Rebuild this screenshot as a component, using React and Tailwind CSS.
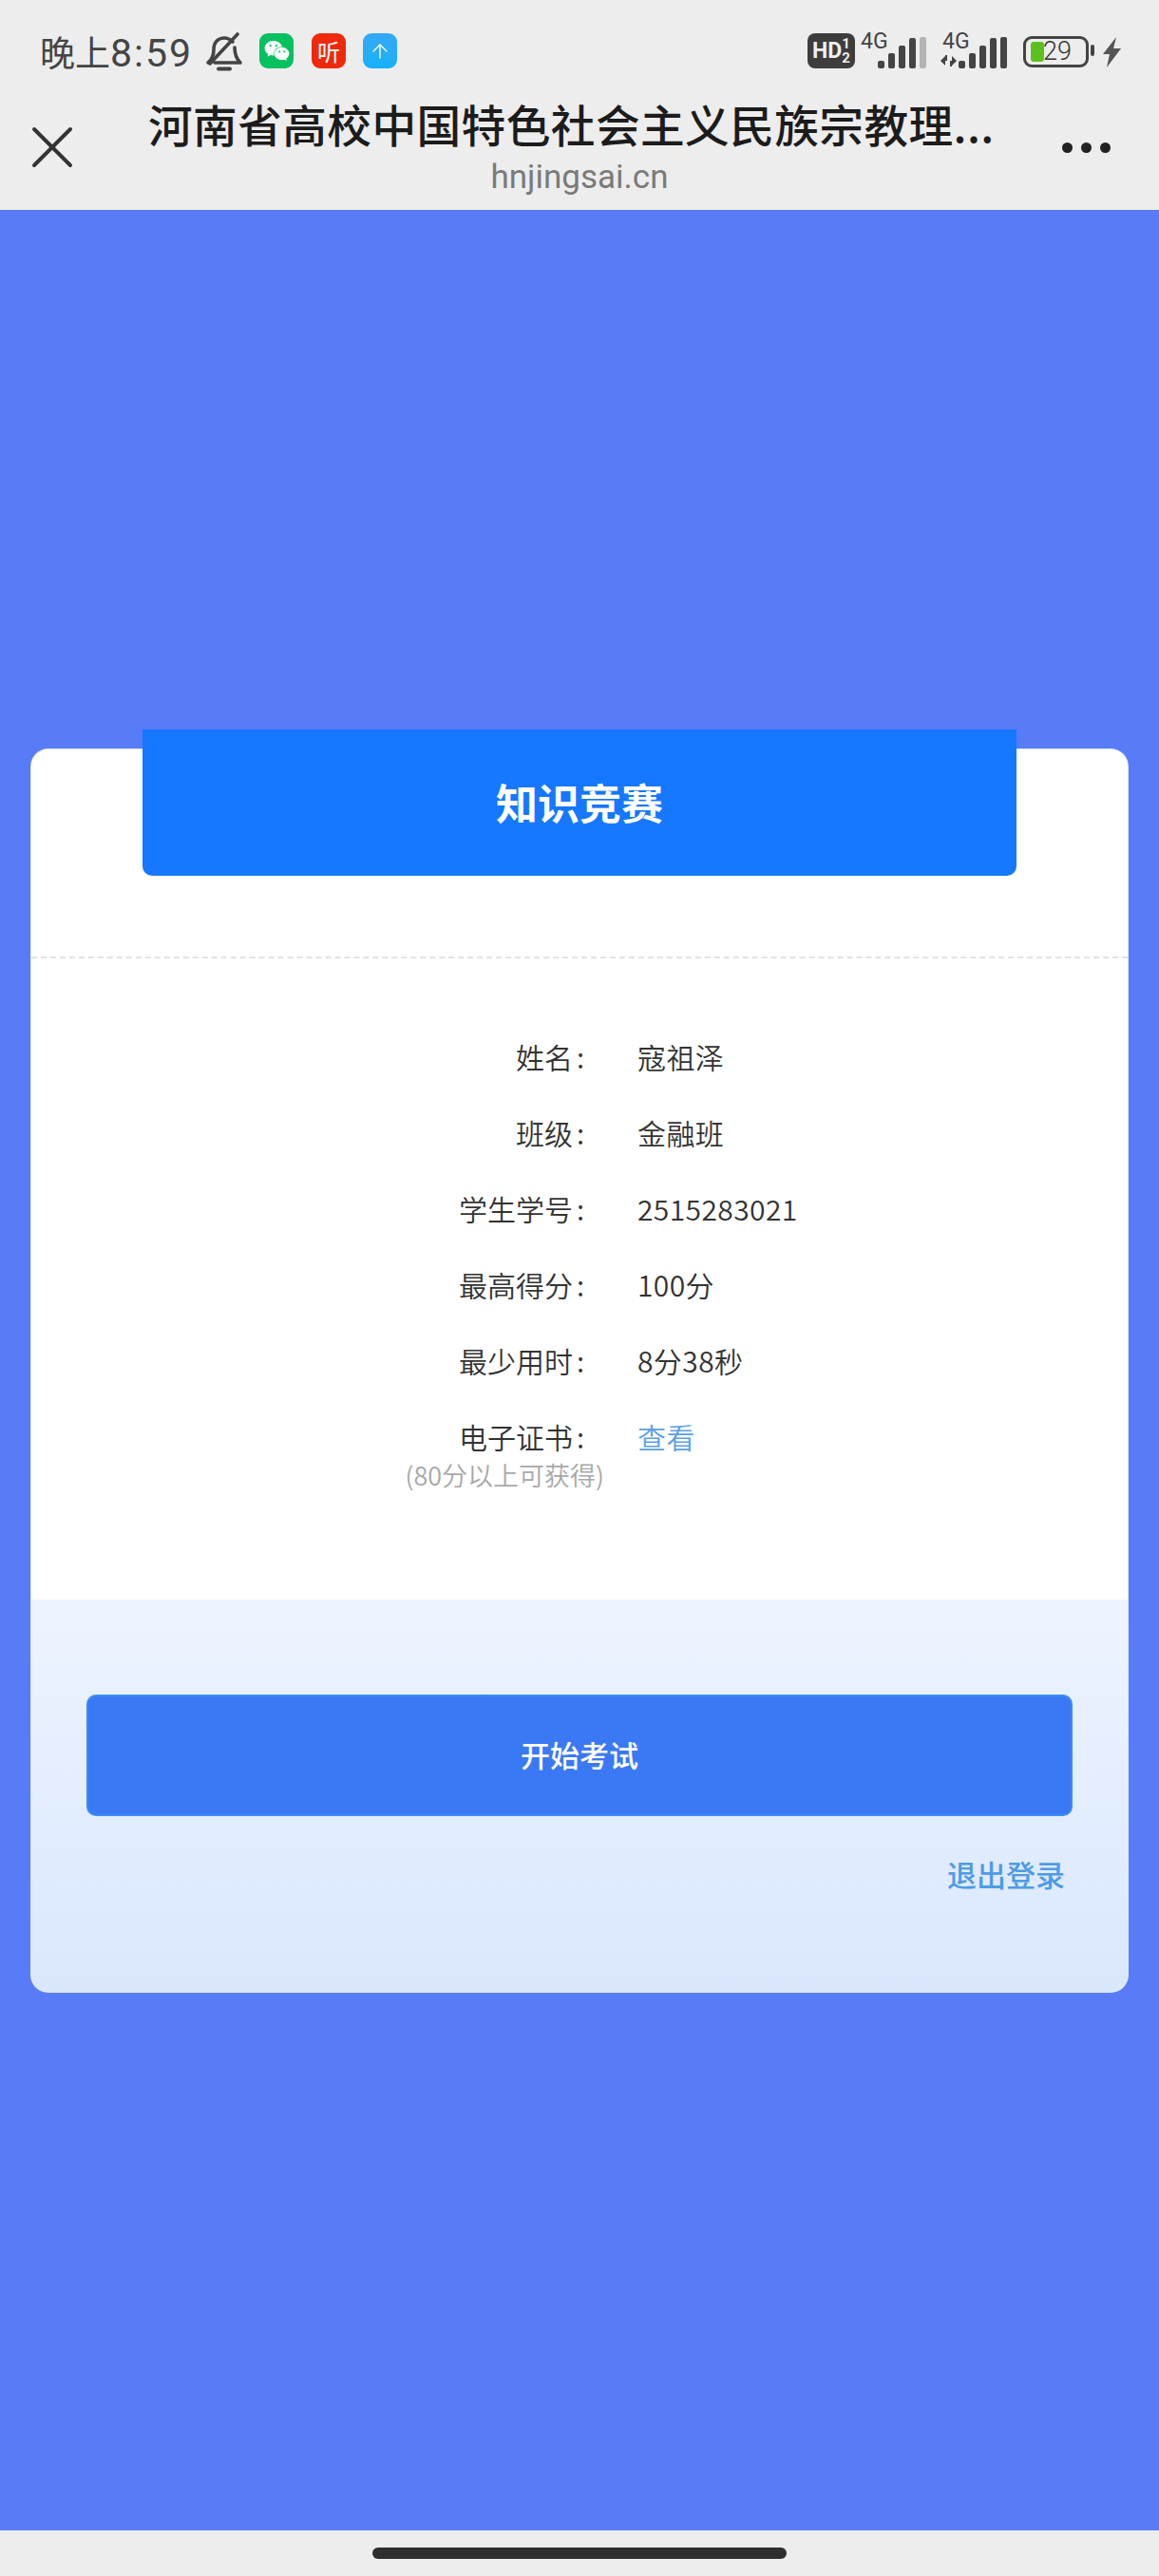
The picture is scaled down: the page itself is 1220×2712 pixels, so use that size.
import { ArrowUp, X } from 'lucide-react';
import { FaWeixin } from 'react-icons/fa';

const CJK = "font-['Noto_Sans_CJK_SC','Noto_Sans',sans-serif]";

const ROWS = [
  { label: '姓名', value: '寇祖泽' },
  { label: '班级', value: '金融班' },
  { label: '学生学号', value: '2515283021' },
  { label: '最高得分', value: '100分' },
  { label: '最少用时', value: '8分38秒' },
];

function BellOff() {
  return (
    <svg width="40" height="42" viewBox="0 0 40 42" fill="none" stroke="#444" strokeWidth="3.6" strokeLinecap="round" strokeLinejoin="round">
      <path d="M3 32 C8 28 9 24 9 18 C9 10 14 6 20 6 C24 6 27 8 29 10" />
      <path d="M31 16 C31 24 33 28 37 32 L10 32" />
      <path d="M14 38.5 H26" strokeWidth="4" />
      <path d="M34 2 L5 33" />
    </svg>
  );
}

function Signal({ faded }) {
  const bars = [
    { x: 0, h: 8 },
    { x: 11, h: 16 },
    { x: 22, h: 24 },
    { x: 33, h: 32 },
  ];
  return (
    <svg width="52" height="33" viewBox="0 0 52 33">
      {bars.map((b) => (
        <rect key={b.x} x={b.x} y={33 - b.h} width="7" height={b.h} rx="2" fill="#444" />
      ))}
      <rect x="44" y="0" width="7" height="33" rx="2" fill={faded ? '#b4b4b4' : '#444'} />
    </svg>
  );
}

function DataArrows() {
  return (
    <svg width="18" height="14" viewBox="0 0 18 14" fill="#444">
      <path d="M1 7 L6 2 V12 Z" />
      <path d="M13 2 L18 7 L13 12 Z" />
      <rect x="6" y="1" width="2" height="6" />
      <rect x="11" y="7" width="2" height="6" />
    </svg>
  );
}

function StatusBar() {
  return (
    <div className="flex h-[76px] items-start pt-[35px] pl-[42px] pr-[39px]">
      <span className={`${CJK} w-[164px] text-[37px] leading-[38px] whitespace-nowrap text-[#444]`}>
        晚上<span className="font-['Roboto',sans-serif] text-[41px] tracking-[2px]">8:59</span>
      </span>
      <span className="ml-[10px] mt-[-1px]">
        <BellOff />
      </span>
      <span className="ml-[17px] flex h-[37px] w-[36px] items-center justify-center rounded-[9px] bg-[#07c160] text-white">
        <FaWeixin size={27} />
      </span>
      <span className={`${CJK} ml-[19px] flex h-[37px] w-[36px] items-center justify-center rounded-[9px] bg-[#ef2a0c] text-[24px] leading-none text-white`}>听</span>
      <span className="ml-[18px] flex h-[37px] w-[36px] items-center justify-center rounded-[9px] bg-gradient-to-b from-[#35a8f5] to-[#12b1fb] text-white">
        <ArrowUp size={24} strokeWidth={1.4} />
      </span>

      <div className="ml-auto flex items-start">
        <span className="flex h-[37px] w-[50px] items-center justify-center rounded-[8px] bg-[#3d3d3d] font-['Roboto',sans-serif] font-bold text-[#eee]">
          <span className="text-[23px] leading-none">HD</span>
          <span className="flex flex-col items-center text-[15px] leading-[15px]">
            <span>1</span>
            <span>2</span>
          </span>
        </span>
        <span className="relative ml-[6px] h-[37px] w-[69px]">
          <span className="absolute left-0 top-[-3px] font-['Roboto',sans-serif] text-[23px] leading-[24px] text-[#444]">4G</span>
          <span className="absolute left-[18px] top-[4px]">
            <Signal faded />
          </span>
        </span>
        <span className="relative ml-[14px] h-[37px] w-[71px]">
          <span className="absolute left-[3px] top-[-3px] font-['Roboto',sans-serif] text-[23px] leading-[24px] text-[#444]">4G</span>
          <span className="absolute left-0 top-[22px]">
            <DataArrows />
          </span>
          <span className="absolute left-[20px] top-[4px]">
            <Signal />
          </span>
        </span>
        <span className="relative ml-[17px] mt-[3px] flex h-[33px] w-[69px] items-center rounded-[9px] border-[3px] border-[#444] pl-[5px]">
          <span className="h-[21px] w-[14px] rounded-[3px] bg-[#5cc11f]" />
          <span className="ml-[-1px] font-['Roboto',sans-serif] text-[27px] font-light leading-none text-[#333]">29</span>
        </span>
        <span className="ml-[2px] mt-[12px] h-[12px] w-[4px] rounded-[2px] bg-[#444]" />
        <svg className="ml-[8px] mt-[4px]" width="21" height="32" viewBox="0 0 21 32" fill="#555">
          <path d="M15 0 L1 18 H8 L5 32 L20 12 H12 Z" />
        </svg>
      </div>
    </div>
  );
}

function TitleBar() {
  return (
    <div className="relative h-[145px]">
      <div className={`${CJK} pl-[156px] pt-[24px] text-[46.7px] font-[450] leading-[60px] tracking-[0.4px] whitespace-nowrap text-[#1c1c1c]`}>
        河南省高校中国特色社会主义民族宗教理...
      </div>
      <div className="mt-[9px] text-center font-['Roboto',sans-serif] text-[35px] leading-[36px] text-[#7a7a7a]">
        hnjingsai.cn
      </div>
      <X className="absolute left-[17px] top-[41px]" size={76} strokeWidth={1.25} color="#333" />
      <div className="absolute left-[1118px] top-[74px] flex gap-[9px]">
        <span className="h-[11px] w-[11px] rounded-full bg-[#222]" />
        <span className="h-[11px] w-[11px] rounded-full bg-[#222]" />
        <span className="h-[11px] w-[11px] rounded-full bg-[#222]" />
      </div>
    </div>
  );
}

function InfoRow({ label, children, note }) {
  return (
    <div className="flex items-start text-[30px] font-[350] leading-[40px] text-[#333]">
      <div className="flex w-[582px] flex-col items-end">
        <span className="whitespace-nowrap">
          {label}
          <span className="ml-[4px]">:</span>
        </span>
        {note && (
          <span className="mr-[-21px] mt-[1px] text-[27px] whitespace-nowrap text-[#a8a8a8]">{note}</span>
        )}
      </div>
      <div className="ml-[56px] tracking-[0.4px] whitespace-nowrap">{children}</div>
    </div>
  );
}

export default function App() {
  return (
    <div className={`${CJK} flex h-[2712px] w-[1220px] flex-col overflow-hidden bg-[#ededed]`}>
      <StatusBar />
      <TitleBar />

      <main className="flex-1 bg-[#587bf7] px-[33px] pt-[568px]">
        <div className="flow-root h-[1308px] rounded-[18px] bg-white shadow-[0_0_0_1px_#dfe6fd]">
          <div className="mx-auto mt-[-21px] flex h-[154px] w-[920px] items-center justify-center rounded-b-[10px] bg-[#1677ff] pb-[2px] text-[44px] font-bold text-white">
            知识竞赛
          </div>
          <div className="mt-[85px] border-t-2 border-dashed border-[#e2e2e2]" />

          <div className="flex h-[675px] flex-col gap-[40px] pt-[83px]">
            {ROWS.map((r) => (
              <InfoRow key={r.label} label={r.label}>
                {r.value}
              </InfoRow>
            ))}
            <InfoRow label="电子证书" note="(80分以上可获得)">
              <span className="text-[#5b9fe6]">查看</span>
            </InfoRow>
          </div>

          <div className="h-[413px] rounded-b-[18px] bg-gradient-to-b from-[#eef4ff] to-[#d9e7fd] px-[58px] pt-[100px]">
            <button className="flex h-[128px] w-full items-center justify-center rounded-[10px] border-2 border-[#3a8cf5] bg-[#3b78f4] pb-[2px] text-[31px] font-medium text-white">
              开始考试
            </button>
            <div className="mt-[41px] pr-[8px] text-right text-[31px] font-medium leading-[40px] text-[#4d9be8]">
              退出登录
            </div>
          </div>
        </div>
      </main>

      <div className="flex h-[48px] items-start justify-center pt-[18px]">
        <div className="h-[12px] w-[436px] rounded-full bg-[#2f2f2f]" />
      </div>
    </div>
  );
}
